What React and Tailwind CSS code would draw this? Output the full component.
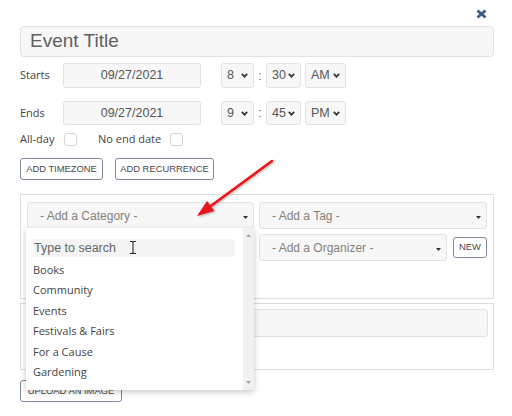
import React from "react";

const Chevron = () => (
  <svg width="7" height="5" viewBox="0 0 7 5" className="shrink-0">
    <polyline points="0.8,0.9 3.5,3.7 6.2,0.9" fill="none" stroke="#333" strokeWidth="1.7" />
  </svg>
);

const Caret = () => (
  <svg width="5" height="3" viewBox="0 0 5 3" className="shrink-0 mt-[4px]">
    <polygon points="0,0 5,0 2.5,3" fill="#333" />
  </svg>
);

const TimeSel = ({ v, w }) => (
  <div className={`${w} h-full flex items-center justify-between pl-[5px] pr-[5px] border border-[#e2e2e2] rounded-[3px] bg-[#f7f7f7] text-[12.5px] text-[#555] font-['Liberation_Sans',sans-serif]`}>
    <span>{v}</span>
    <Chevron />
  </div>
);

const Select = ({ label, w }) => (
  <div className={`${w} h-[27px] flex items-center justify-between pl-[12px] pr-[5px] border border-[#e2e2e2] rounded-[3px] bg-[#f7f7f7] text-[12px] text-[#85817b] font-['Liberation_Sans',sans-serif]`}>
    <span>{label}</span>
    <Caret />
  </div>
);

const Btn = ({ children, w }) => (
  <div className={`${w} h-full flex items-center justify-center border border-[#7f889b] rounded-[3px] text-[9.4px] text-[#4a4a4a] font-['Liberation_Sans',sans-serif]`}>
    {children}
  </div>
);

export default function App() {
  return (
    <div className="relative w-[512px] h-[416px] bg-white overflow-hidden font-['Open_Sans',sans-serif]">
      <div className="flex justify-end h-[26px] pr-[25px] pt-[9px]">
        <svg width="11" height="10" viewBox="0 0 11 10">
          <line x1="1.5" y1="1.5" x2="9.5" y2="8.5" stroke="#3d5b83" strokeWidth="2.8" />
          <line x1="9.5" y1="1.5" x2="1.5" y2="8.5" stroke="#3d5b83" strokeWidth="2.8" />
        </svg>
      </div>

      <div className="ml-[20px] w-[474px] h-[31px] flex items-center pl-[9px] border border-[#e2e2e2] rounded-[4px] bg-[#f7f7f7] text-[19px] text-[#606060] font-['Liberation_Sans',sans-serif]">
        Event Title
      </div>

      {[
        { label: "Starts", h: "8", m: "30", ap: "AM", mt: "mt-[6px]", hh: "h-[25px]" },
        { label: "Ends", h: "9", m: "45", ap: "PM", mt: "mt-[13px]", hh: "h-[24px]" },
      ].map((r) => (
        <div key={r.label} className={`${r.mt} ${r.hh} flex items-center pl-[20px]`}>
          <div className="w-[43px] text-[11px] text-[#444]">{r.label}</div>
          <div className="w-[138px] h-full flex items-center justify-center border border-[#e2e2e2] rounded-[3px] bg-[#f7f7f7] text-[12.5px] text-[#555] font-['Liberation_Sans',sans-serif]">
            09/27/2021
          </div>
          <div className="ml-[20px] h-full flex items-center">
            <TimeSel v={r.h} w="w-[33px]" />
            <div className="w-[12px] text-center text-[12px] text-[#666] font-['Liberation_Sans',sans-serif]">:</div>
            <TimeSel v={r.m} w="w-[35px]" />
            <div className="w-[4px]" />
            <TimeSel v={r.ap} w="w-[41px]" />
          </div>
        </div>
      ))}

      <div className="mt-[8px] h-[13px] flex items-center pl-[20px] text-[11px] text-[#444]">
        <div className="w-[44px]">All-day</div>
        <div className="w-[13px] h-[13px] border border-[#d5d5d5] rounded-[3px] bg-white" />
        <div className="w-[21px]" />
        <div className="w-[72px]">No end date</div>
        <div className="w-[13px] h-[13px] border border-[#d5d5d5] rounded-[3px] bg-white" />
      </div>

      <div className="mt-[12px] h-[22px] flex pl-[20px] gap-[12px]">
        <Btn w="w-[83px]">ADD TIMEZONE</Btn>
        <Btn w="w-[99px]">ADD RECURRENCE</Btn>
      </div>

      <div className="mt-[14px] ml-[20px] w-[474px] h-[105px] border border-[#dddddd] pt-[7px] pl-[6px]">
        <div className="grid grid-cols-[227px_228px] gap-x-[5px] gap-y-[5px]">
          <Select label="- Add a Category -" w="w-[227px]" />
          <Select label="- Add a Tag -" w="w-[228px]" />
          <Select label="" w="w-[227px]" />
          <div className="flex items-center gap-[6px]">
            <Select label="- Add a Organizer -" w="w-[188px]" />
            <div className="w-[34px] h-[21px] flex items-center justify-center border border-[#7f889b] rounded-[3px] text-[9.4px] text-[#4a4a4a] font-['Liberation_Sans',sans-serif]">
              NEW
            </div>
          </div>
        </div>
      </div>

      <div className="mt-[4px] ml-[20px] w-[474px] h-[67px] border border-[#dddddd] pt-[5px] pl-[6px]">
        <div className="w-[461px] h-[28px] border border-[#e2e2e2] rounded-[3px] bg-[#f7f7f7]" />
      </div>

      <div className="mt-[10px] ml-[20px] h-[22px] flex">
        <Btn w="w-[102px]">UPLOAD AN IMAGE</Btn>
      </div>

      {/* dropdown */}
      <div className="absolute left-[26px] top-[228px] w-[228px] h-[162px] bg-white shadow-[0_2px_6px_rgba(0,0,0,0.22)]">
        <div className="pl-[7px] pt-[11px] pr-[19px]">
          <div className="relative h-[18px] bg-[#f4f4f4] rounded-[2px] flex items-center pl-[1px] text-[12.5px] text-[#666] font-['Liberation_Sans',sans-serif]">
            Type to search
            <svg className="absolute left-[96px] top-[1px]" width="8" height="15" viewBox="0 0 8 15">
              <path d="M1 1.5 H3 Q4 1.5 4 2.5 Q4 1.5 5 1.5 H7 M4 2.5 V12.5 M1 13.5 H3 Q4 13.5 4 12.5 Q4 13.5 5 13.5 H7" fill="none" stroke="#fff" strokeWidth="2.6" />
              <path d="M1 1.5 H3 Q4 1.5 4 2.5 Q4 1.5 5 1.5 H7 M4 2.5 V12.5 M1 13.5 H3 Q4 13.5 4 12.5 Q4 13.5 5 13.5 H7" fill="none" stroke="#222" strokeWidth="1.1" />
            </svg>
          </div>
          <div className="mt-[3px] text-[11px] text-[#444]">
            {["Books", "Community", "Events", "Festivals & Fairs", "For a Cause", "Gardening"].map((t) => (
              <div key={t} className="h-[20.4px] leading-[20.4px]">{t}</div>
            ))}
          </div>
        </div>
        <div className="absolute right-0 top-0 bottom-0 w-[11px] bg-[#f1f1f1] flex flex-col items-center justify-between py-[6px]">
          <svg width="5" height="3" viewBox="0 0 5 3"><polygon points="0,3 5,3 2.5,0" fill="#a5a5a5" /></svg>
          <svg width="5" height="3" viewBox="0 0 5 3"><polygon points="0,0 5,0 2.5,3" fill="#a5a5a5" /></svg>
        </div>
      </div>

      {/* red arrow */}
      <svg className="absolute left-0 top-0 pointer-events-none" width="512" height="416" viewBox="0 0 512 416">
        <defs>
          <filter id="sh" x="-20%" y="-20%" width="140%" height="140%">
            <feDropShadow dx="1" dy="1" stdDeviation="1" floodColor="#000" floodOpacity="0.3" />
          </filter>
        </defs>
        <g filter="url(#sh)">
          <line x1="272" y1="161" x2="208" y2="208" stroke="#e8151b" strokeWidth="2.6" strokeLinecap="round" />
          <polygon points="197,216 214.5,211 207,201" fill="#e8151b" />
        </g>
      </svg>
    </div>
  );
}
